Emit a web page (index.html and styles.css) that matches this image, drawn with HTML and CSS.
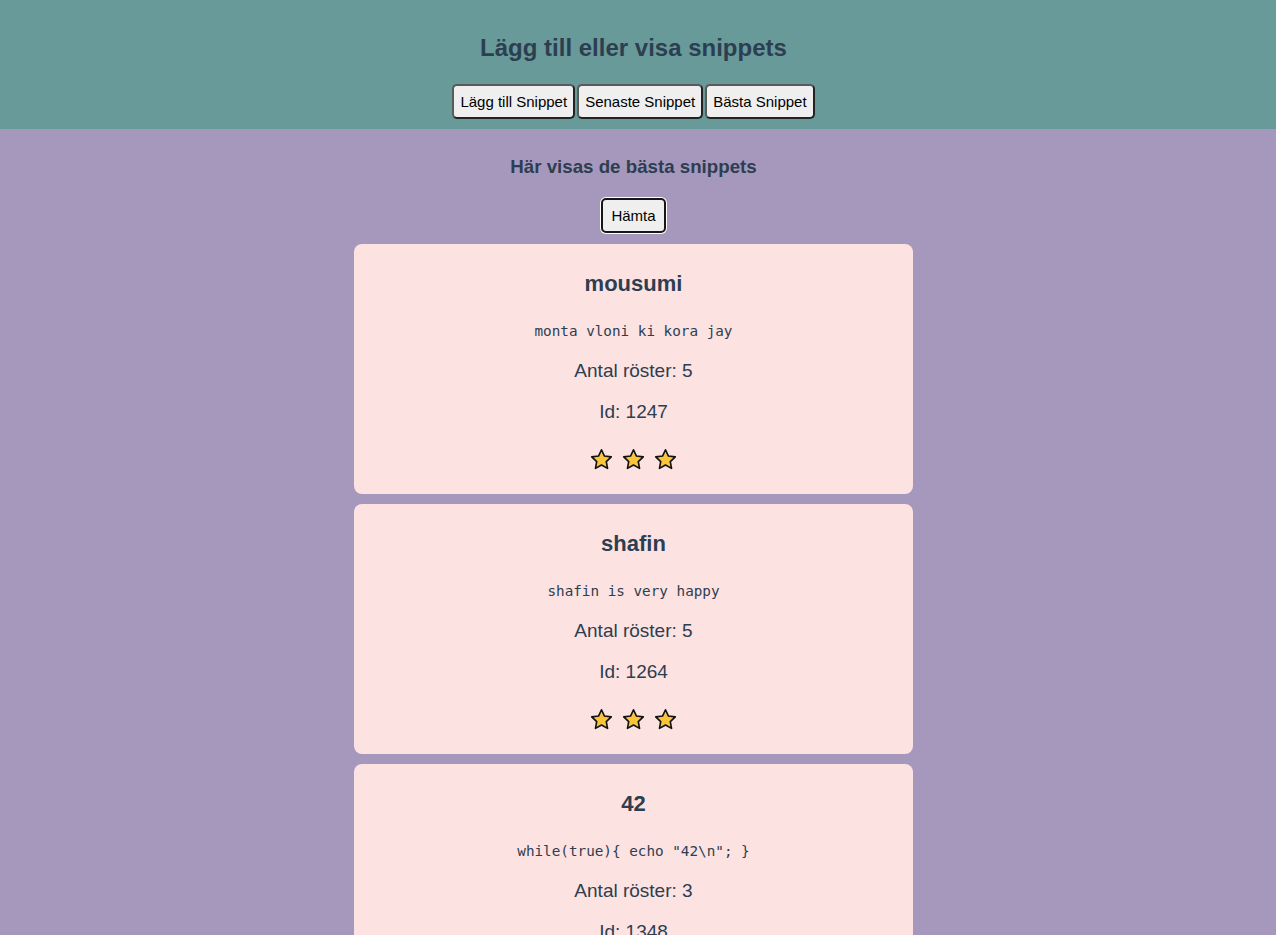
FILE: index.html
```html
<!DOCTYPE html>
<html lang="sv">
<head>
<meta charset="utf-8">
<title>Snippets</title>
<link rel="stylesheet" href="styles.css">
</head>
<body>
<div class="app">
  <header class="header">
    <h2 class="header-title">Lägg till eller visa snippets</h2>
    <nav class="nav">
      <button class="nav-btn">Lägg till Snippet</button>
      <button class="nav-btn">Senaste Snippet</button>
      <button class="nav-btn">Bästa Snippet</button>
    </nav>
  </header>
  <main class="main">
    <h3 class="section-title">Här visas de bästa snippets</h3>
    <button class="fetch-btn">Hämta</button>
    <div class="list">
      <div class="card">
        <h2 class="card-title">mousumi</h2>
        <pre class="code">monta vloni ki kora jay</pre>
        <p class="meta">Antal röster: 5</p>
        <p class="meta">Id: 1247</p>
        <div class="stars">
          <svg class="star" viewBox="0 0 24 24"><path d="M12 1.8l3.1 6.6 7.1.9-5.2 4.9 1.3 7.1L12 17.8l-6.3 3.5 1.3-7.1L1.8 9.3l7.1-.9z"/></svg>
          <svg class="star" viewBox="0 0 24 24"><path d="M12 1.8l3.1 6.6 7.1.9-5.2 4.9 1.3 7.1L12 17.8l-6.3 3.5 1.3-7.1L1.8 9.3l7.1-.9z"/></svg>
          <svg class="star" viewBox="0 0 24 24"><path d="M12 1.8l3.1 6.6 7.1.9-5.2 4.9 1.3 7.1L12 17.8l-6.3 3.5 1.3-7.1L1.8 9.3l7.1-.9z"/></svg>
        </div>
      </div>
      <div class="card">
        <h2 class="card-title">shafin</h2>
        <pre class="code">shafin is very happy</pre>
        <p class="meta">Antal röster: 5</p>
        <p class="meta">Id: 1264</p>
        <div class="stars">
          <svg class="star" viewBox="0 0 24 24"><path d="M12 1.8l3.1 6.6 7.1.9-5.2 4.9 1.3 7.1L12 17.8l-6.3 3.5 1.3-7.1L1.8 9.3l7.1-.9z"/></svg>
          <svg class="star" viewBox="0 0 24 24"><path d="M12 1.8l3.1 6.6 7.1.9-5.2 4.9 1.3 7.1L12 17.8l-6.3 3.5 1.3-7.1L1.8 9.3l7.1-.9z"/></svg>
          <svg class="star" viewBox="0 0 24 24"><path d="M12 1.8l3.1 6.6 7.1.9-5.2 4.9 1.3 7.1L12 17.8l-6.3 3.5 1.3-7.1L1.8 9.3l7.1-.9z"/></svg>
        </div>
      </div>
      <div class="card">
        <h2 class="card-title">42</h2>
        <pre class="code">while(true){ echo "42\n"; }</pre>
        <p class="meta">Antal röster: 3</p>
        <p class="meta">Id: 1348</p>
        <div class="stars">
          <svg class="star" viewBox="0 0 24 24"><path d="M12 1.8l3.1 6.6 7.1.9-5.2 4.9 1.3 7.1L12 17.8l-6.3 3.5 1.3-7.1L1.8 9.3l7.1-.9z"/></svg>
          <svg class="star" viewBox="0 0 24 24"><path d="M12 1.8l3.1 6.6 7.1.9-5.2 4.9 1.3 7.1L12 17.8l-6.3 3.5 1.3-7.1L1.8 9.3l7.1-.9z"/></svg>
        </div>
      </div>
    </div>
  </main>
</div>
</body>
</html>
```

FILE: styles.css
```css
html, body {
  margin: 0;
  padding: 0;
  background: #a698bc;
}
body {
  font-family: "Liberation Sans", Arial, sans-serif;
  color: #2c3e50;
}
.app {
  display: flex;
  flex-direction: column;
  min-height: 100vh;
}
.header {
  background: #689a9a;
  display: flex;
  flex-direction: column;
  align-items: center;
  padding: 34px 9px 10px 0;
}
.header-title {
  margin: 0 0 22px;
  font-size: 24px;
  font-weight: bold;
  line-height: 28px;
}
.nav {
  display: flex;
  gap: 2px;
}
.nav-btn, .fetch-btn {
  font-family: "Liberation Sans", Arial, sans-serif;
  font-size: 15px;
  color: #000;
  background: #efefef;
  border: 2px solid;
  border-color: #5a5a5a #222 #222 #5a5a5a;
  border-radius: 5px;
  padding: 7px 6px;
  line-height: 17px;
}
.main {
  display: flex;
  flex-direction: column;
  align-items: center;
  padding: 0 9px 0 0;
}
.section-title {
  margin: 27px 0 20px;
  font-size: 18.72px;
  line-height: 22px;
  font-weight: bold;
}
.fetch-btn {
  border-color: #161616;
  box-shadow: 0 0 0 1px #fff;
  padding: 7px 8px;
}
.list {
  display: flex;
  flex-direction: column;
  gap: 10px;
  margin-top: 11px;
  padding-bottom: 20px;
}
.card {
  width: 559px;
  box-sizing: border-box;
  background: #fde2e2;
  border-radius: 8px;
  padding: 27px 20px 23px;
  display: flex;
  flex-direction: column;
  align-items: center;
}
.card-title {
  margin: 0;
  font-size: 22px;
  line-height: 26px;
  font-weight: bold;
}
.code {
  margin: 26px 0 0;
  font-family: "DejaVu Sans Mono", "Liberation Mono", monospace;
  font-size: 14.3px;
  line-height: 17px;
  color: #2c3e50;
}
.meta {
  margin: 20px 0 0;
  font-size: 19px;
  line-height: 22px;
}
.meta + .meta {
  margin-top: 19px;
}
.stars {
  display: flex;
  gap: 9px;
  margin-top: 25px;
}
.star {
  width: 23px;
  height: 23px;
  fill: #fbc53b;
  stroke: #111;
  stroke-width: 1.7;
  stroke-linejoin: round;
}
```
